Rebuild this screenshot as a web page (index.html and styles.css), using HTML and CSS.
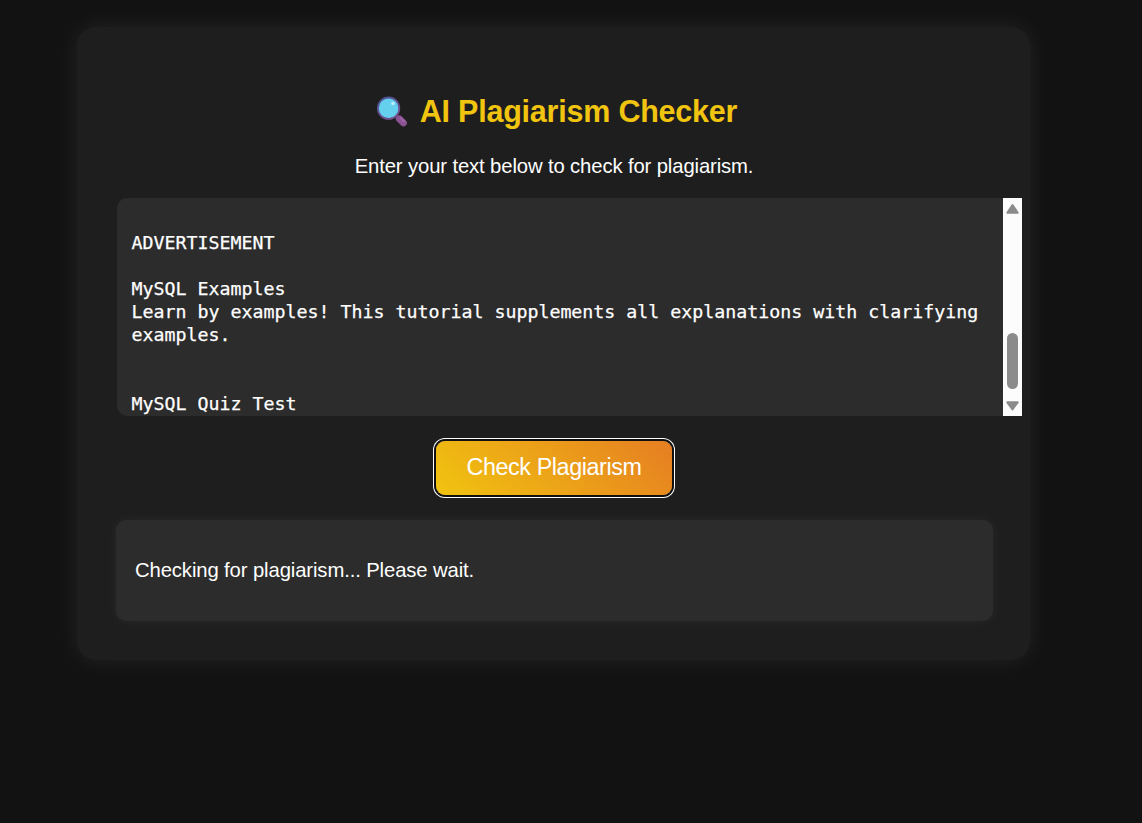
FILE: index.html
```html
<!DOCTYPE html>
<html lang="en">
<head>
<meta charset="utf-8">
<title>AI Plagiarism Checker</title>
<link rel="stylesheet" href="styles.css">
</head>
<body>
<main class="container">
  <h1 class="title">
    <svg class="title-icon" viewBox="0 0 32 32" aria-hidden="true">
      <defs>
        <linearGradient id="rim" x1="0" y1="0" x2="0.6" y2="1"><stop offset="0" stop-color="#4a5698"/><stop offset="1" stop-color="#75508e"/></linearGradient>
      </defs>
      <path d="M20.5 20l3 3" stroke="#5c3a6e" stroke-width="3"/>
      <path d="M23.4 22.9l4 4" stroke="#8c5393" stroke-width="7" stroke-linecap="round"/>
      <path d="M24.9 22.2l3.4 3.4" stroke="#a169a8" stroke-width="1.6" stroke-linecap="round"/>
      <circle cx="12.6" cy="12.2" r="10.7" fill="#65d0ee" stroke="url(#rim)" stroke-width="1.8"/>
      <circle cx="17" cy="7.5" r="1.8" fill="#b9f0fb"/>
    </svg>
    <span>AI Plagiarism Checker</span>
  </h1>
  <p class="intro">Enter your text below to check for plagiarism.</p>
  <div class="editor">
    <pre class="editor-text">ADVERTISEMENT

MySQL Examples
Learn by examples! This tutorial supplements all explanations with clarifying
examples.


MySQL Quiz Test</pre>
    <div class="scrollbar">
      <svg class="arrow" viewBox="0 0 19 22"><path d="M9.5 7l5.2 7.7H4.3z" fill="#8b8b8b" stroke="#8b8b8b" stroke-width="2" stroke-linejoin="round"/></svg>
      <div class="thumb"></div>
      <svg class="arrow" viewBox="0 0 19 22"><path d="M9.5 15.5l5.2-7.2H4.3z" fill="#8b8b8b" stroke="#8b8b8b" stroke-width="2" stroke-linejoin="round"/></svg>
    </div>
  </div>
  <button class="check-button">Check Plagiarism</button>
  <section class="result">Checking for plagiarism... Please wait.</section>
</main>
</body>
</html>
```
FILE: styles.css
```css
* { box-sizing: border-box; }

body {
  margin: 0;
  height: 823px;
  overflow: hidden;
  background: #121212;
  color: #fff;
  font-family: "Liberation Sans", Arial, sans-serif;
}

.container {
  display: flex;
  flex-direction: column;
  width: 953px;
  height: 633px;
  margin: 27px 0 0 77px;
  padding: 65px 38px 0 39px;
  border-radius: 19px;
  background: #1e1e1e;
  box-shadow: 0 0 25px rgba(255, 255, 255, 0.08);
}

.title {
  display: flex;
  justify-content: center;
  gap: 12px;
  height: 40px;
  margin: 0;
  padding-left: 5px;
  line-height: 39px;
  font-size: 30.5px;
  letter-spacing: -0.22px;
  white-space: nowrap;
  color: #f1c40f;
}

.title-icon {
  width: 32px;
  height: 32px;
  margin-top: 4px;
}

.intro {
  height: 24px;
  margin: 22px 0 0;
  line-height: 24px;
  font-size: 20.3px;
  letter-spacing: -0.13px;
  text-align: center;
}

.editor {
  display: flex;
  justify-content: space-between;
  width: 905px;
  height: 218px;
  margin: 20px 0 0 1px;
  border-radius: 10px 0 0 10px;
  background: #2c2c2c;
  overflow: hidden;
}

.editor-text {
  margin: 0;
  padding: 33px 0 0 14.5px;
  line-height: 23px;
  font-family: "DejaVu Sans Mono", monospace;
  font-size: 18.27px;
  -webkit-text-stroke: 0.25px #fff;
}

.scrollbar {
  display: flex;
  flex-direction: column;
  align-items: center;
  justify-content: space-between;
  width: 19px;
  background: #fcfcfc;
}

.arrow {
  width: 19px;
  height: 22px;
}

.thumb {
  width: 11px;
  height: 56px;
  margin-top: 108px;
  border-radius: 6px;
  background: #8b8b8b;
}

.check-button {
  align-self: center;
  width: 236px;
  height: 54px;
  margin: 25px 0 0;
  padding: 0 0 2px;
  border: 0;
  border-radius: 9px;
  outline: 0;
  background: linear-gradient(45deg, #f1c40f, #e67e22);
  box-shadow: 0 0 0 2px #101010, 0 0 0 3px #fff;
  color: #fff;
  font-family: inherit;
  font-size: 23.3px;
  letter-spacing: -0.4px;
}

.result {
  width: 877px;
  height: 101px;
  margin-top: 25px;
  padding: 38px 19px;
  border-radius: 10px;
  background: #2c2c2c;
  box-shadow: 0 0 12px rgba(255, 255, 255, 0.05);
  line-height: 24px;
  font-size: 20.3px;
  letter-spacing: -0.12px;
}
```
